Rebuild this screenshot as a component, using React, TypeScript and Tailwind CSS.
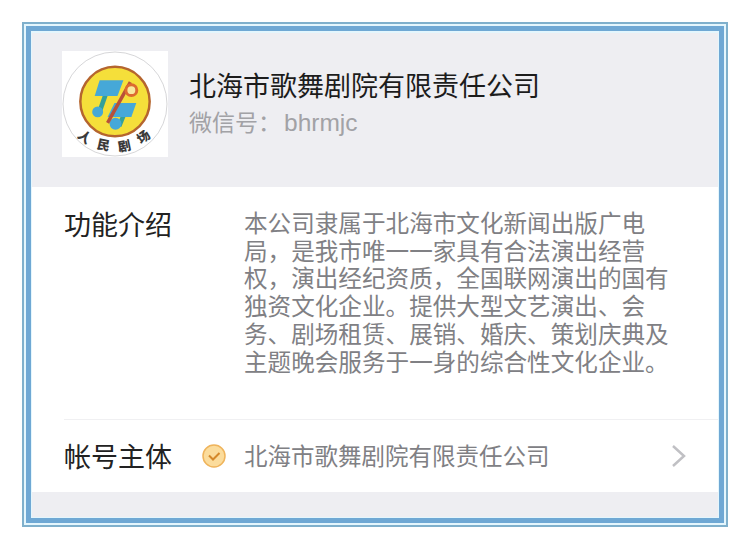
const cjk = "font-['Noto_Sans_CJK_SC','Liberation_Sans',sans-serif]";

function Logo() {
  const glyphs = [
    { ch: "人", x: 20, y: 90, r: 38 },
    { ch: "民", x: 41, y: 99, r: 12 },
    { ch: "剧", x: 64, y: 100, r: -12 },
    { ch: "场", x: 85, y: 90, r: -36 },
  ];
  return (
    <svg width="106" height="106" viewBox="0 0 107 106" className="shrink-0 bg-white">
      <circle cx="53.5" cy="53" r="52.5" fill="#fff" stroke="#d6d6d8" strokeWidth="1" />
      <circle cx="53.5" cy="50.5" r="35" fill="#f5df3a" stroke="#b5652e" strokeWidth="2.5" />
      {/* notes */}
      <path d="M38 29 H62 L56 45 H33 Z" fill="#46a8d8" />
      <path d="M41 45 H46 L40 62 H35 Z" fill="#34a09a" />
      <circle cx="36" cy="61" r="5.5" fill="#46a8d8" />
      <path d="M53 52 H75 L70 66 H46 Z" fill="#46a8d8" />
      <path d="M59 66 H64 L60 76 H55 Z" fill="#34a09a" />
      <circle cx="54" cy="73" r="6" fill="#46a8d8" />
      {/* baton and ring */}
      <path d="M69 31 L46 72" stroke="#b8503a" strokeWidth="3.5" />
      <circle cx="70" cy="39" r="5.5" fill="#f8e8a0" stroke="#dd6a30" strokeWidth="3" />
      {glyphs.map((g) => (
        <text
          key={g.ch}
          transform={`translate(${g.x} ${g.y}) rotate(${g.r})`}
          textAnchor="middle"
          fontSize="13"
          fontWeight="900"
          fill="#3a3a3a"
          fontFamily="'Noto Sans CJK SC', serif"
        >
          {g.ch}
        </text>
      ))}
    </svg>
  );
}

export default function App() {
  return (
    <div className={`min-h-[549px] bg-white pt-[22px] pl-[22px] ${cjk}`}>
      <div className="w-[706px] h-[505px] border-2 border-[#7fb0cc] bg-[#e4f6fd] p-[2px]">
        <div className="h-full border-[5px] border-[#6fa8d4] bg-[#e4f6fd] pt-[2px] pl-[1px] pr-[1px] pb-[1px]">
          <div className="h-full flex flex-col bg-white">
            <header className="h-[154px] bg-[#eeeef2] flex items-start pl-[30px] pt-[18px]">
              <Logo />
              <div className="ml-[21px] pt-[16px]">
                <h1 className="text-[27px] leading-[36px] text-[#1c1c1c]">北海市歌舞剧院有限责任公司</h1>
                <p className="text-[23px] leading-[34px] text-[#a2a2a6] mt-[1px] flex items-baseline">
                  微信号：
                  <span className="ml-[3px] font-['Liberation_Sans',sans-serif] text-[24.5px]">bhrmjc</span>
                </p>
              </div>
            </header>

            <section className="flex-1 pl-[32px]">
              <div className="h-[233px] border-b border-[#f0f0f2] flex items-start pt-[19px]">
                <div className="w-[180px] text-[27px] leading-[36px] text-[#222]">功能介绍</div>
                <p className="w-[430px] mt-[3px] text-[23.6px] leading-[27.7px] text-[#808084]">
                  本公司隶属于北海市文化新闻出版广电局，是我市唯一一家具有合法演出经营权，演出经纪资质，全国联网演出的国有独资文化企业。提供大型文艺演出、会务、剧场租赁、展销、婚庆、策划庆典及主题晚会服务于一身的综合性文化企业。
                </p>
              </div>
              <div className="h-[71px] flex items-center">
                <div className="w-[137px] text-[27px] leading-[36px] text-[#222]">帐号主体</div>
                <svg width="26" height="26" viewBox="0 0 26 26" className="shrink-0">
                  <circle cx="13" cy="13" r="11" fill="#fbdc9c" stroke="#efb45c" strokeWidth="1.5" />
                  <path d="M8 12.5 L12 16.5 L18.5 10" fill="none" stroke="#d4882a" strokeWidth="2" />
                </svg>
                <span className="ml-[17px] text-[23.5px] text-[#808084]">北海市歌舞剧院有限责任公司</span>
                <svg width="16" height="24" viewBox="0 0 16 24" className="ml-[121px] shrink-0">
                  <path d="M2 2 L13 12 L2 22" fill="none" stroke="#c0c0c4" strokeWidth="2.5" />
                </svg>
              </div>
            </section>

            <div className="h-[25px] bg-[#eeeef2]" />
          </div>
        </div>
      </div>
    </div>
  );
}
